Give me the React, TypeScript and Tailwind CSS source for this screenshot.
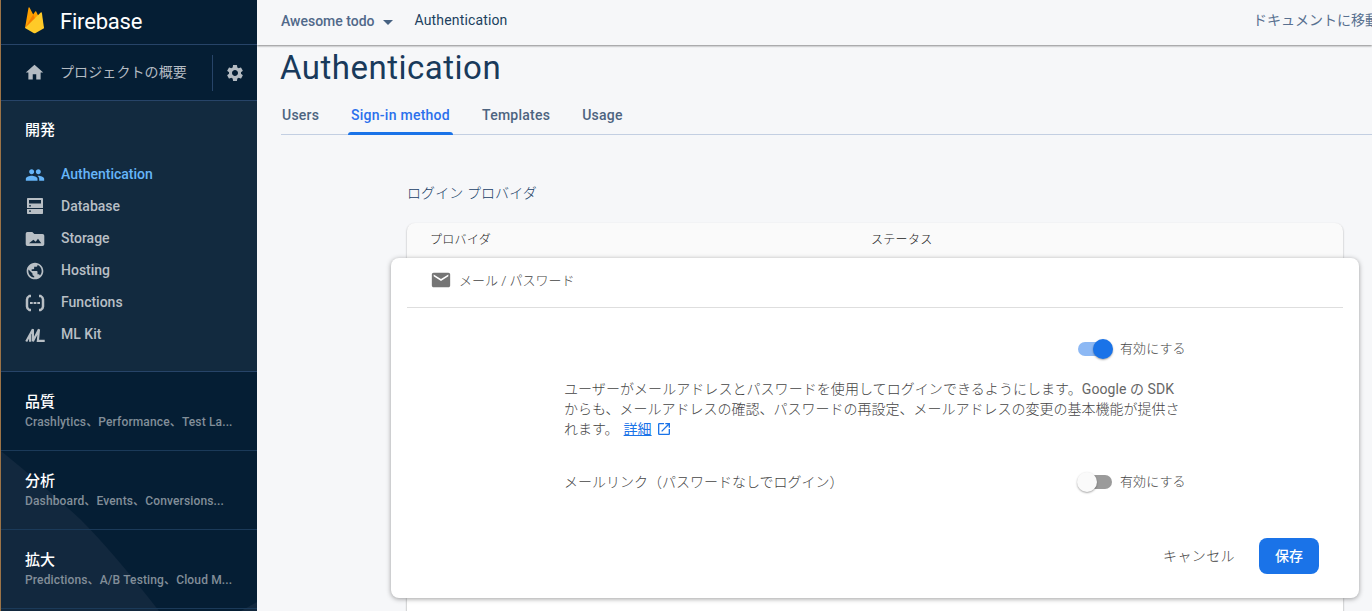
import type { ReactNode } from "react";
import { MdHome, MdSettings, MdPeople, MdPublic, MdEmail, MdOpenInNew } from "react-icons/md";

function FirebaseLogo() {
  return (
    <svg width="19" height="27" viewBox="0 0 19 27" className="shrink-0">
      <path d="M0 21 3.5.7Q3.9-.2 4.5.6L8.2 7.6 10.2 4.6Q10.7 3.8 11.2 4.6L19 21Z" fill="#ffa000" />
      <path d="M11.2 14 8.2 7.5 0 21Z" fill="#f57c00" />
      <path d="M0 21 15.7 5.6Q16.6 4.8 16.9 6L19 21.2 10.7 25.9Q9.6 26.4 8.6 25.9Z" fill="#ffca28" />
    </svg>
  );
}

function DatabaseIcon() {
  return (
    <svg width="18" height="18" viewBox="0 0 18 18" fill="currentColor" fillRule="evenodd" className="-mt-0.5">
      <path d="M1.800 1h14.400q.8 0 .8.800V11H1V1.800Q1 1 1.800 1ZM3 3v3.500h12V3ZM3 8.300v1.200h2V8.300Z" />
      <path d="M1 12h16v4.200q0 .8-.8.800H1.800q-.8 0-.8-.8Zm2 1.500v1.200h2v-1.200Z" />
    </svg>
  );
}

function StorageIcon() {
  return (
    <svg width="20" height="18" viewBox="0 0 20 18" fill="currentColor" fillRule="evenodd">
      <path d="M2.300 2h5l2 2H17.500q1.800 0 1.800 1.800v8.400q0 1.800-1.800 1.800H2.500Q.7 16 .7 14.200V3.800Q.7 2 2.300 2ZM4 13.300h12.300l-3.300-4.500-2.300 3-2.300-2Z" />
    </svg>
  );
}

function FunctionsIcon() {
  return (
    <svg width="20" height="18" viewBox="0 0 20 18" fill="none" stroke="currentColor" strokeWidth="2.500">
      <path d="M6 2H4.300Q2 3.200 2 5.500v7Q2 14.800 4.300 16H6M14 2h1.700Q18 3.200 18 5.500v7Q18 14.800 15.700 16H14" />
      <path d="M5 9h2.700M8.600 9h2.800M12.300 9h2.700" strokeWidth="2" />
    </svg>
  );
}

function MlIcon() {
  return (
    <svg width="21" height="18" viewBox="0 0 21 18" fill="none" stroke="currentColor" strokeWidth="2.300">
      <path d="M1.300 15.800 8.300 3v12.500L14.700 3 13.500 15.200h7.200M5.400 8.500v7.500" />
    </svg>
  );
}

const products: { label: string; icon: ReactNode; active?: boolean }[] = [
  { label: "Authentication", icon: <MdPeople size={20} />, active: true },
  { label: "Database", icon: <DatabaseIcon /> },
  { label: "Storage", icon: <StorageIcon /> },
  { label: "Hosting", icon: <MdPublic size={20} /> },
  { label: "Functions", icon: <FunctionsIcon /> },
  { label: "ML Kit", icon: <MlIcon /> },
];

const groups = [
  { title: "品質", items: "Crashlytics、Performance、Test La..." },
  { title: "分析", items: "Dashboard、Events、Conversions..." },
  { title: "拡大", items: "Predictions、A/B Testing、Cloud M..." },
];

function Sidebar() {
  return (
    <aside className="relative flex h-full w-[257px] shrink-0 flex-col overflow-hidden border-l border-[#9b7347] bg-[#051e34]">
      <svg className="absolute bottom-0 left-0" width="256" height="160" viewBox="0 0 256 160">
        <path d="M0 0Q48 39 80 69Q112 101 158 160H0Z" fill="#12283e" />
        <path d="M240 160 256 151v9Z" fill="#12283e" />
      </svg>
      <div className="relative flex h-[45px] shrink-0 items-center gap-4 border-b border-[#274468] pb-[4px] pl-6">
        <FirebaseLogo />
        <span className="mt-[3px] text-[22px] leading-7 tracking-[-0.2px] text-white">Firebase</span>
      </div>
      <div className="relative flex h-14 shrink-0 items-center border-b border-[#274468] pl-[23px] text-[#b4bbc2]">
        <MdHome size={21} />
        <span className="mt-[-2px] ml-[15px] w-[152px] text-sm leading-5 tracking-[0.1px]">プロジェクトの概要</span>
        <div className="h-9 w-px bg-[#274468]" />
        <MdSettings size={20} className="ml-3" />
      </div>
      <section className="relative h-[271px] shrink-0 border-b border-[#274468] bg-[#122a3f] pt-[19px] pl-6">
        <h2 className="text-[15px] leading-5 font-medium text-white">開発</h2>
        <nav className="mt-[18px]">
          {products.map((p) => (
            <a
              key={p.label}
              className={`flex h-8 items-center gap-4 text-sm font-medium ${p.active ? "text-[#66b5f8]" : "text-[#b8bfc5]"}`}
            >
              <span className="flex w-5 justify-center pt-0.5">{p.icon}</span>
              {p.label}
            </a>
          ))}
        </nav>
      </section>
      {groups.map((g) => (
        <section key={g.title} className="relative h-[79px] shrink-0 border-b border-[#1b3a59] pt-5 pl-6">
          <h2 className="text-[15px] leading-5 font-medium text-white">{g.title}</h2>
          <p className="text-[12px] leading-5 font-medium tracking-[0.14px] whitespace-nowrap text-[#828e99]">{g.items}</p>
        </section>
      ))}
    </aside>
  );
}

function Toggle({ on }: { on?: boolean }) {
  return (
    <div className="flex items-center">
      <div
        className={`flex h-[14px] w-[34px] items-center rounded-full ${on ? "justify-end bg-[#8cb8f4]" : "justify-start bg-[#9b9b9b]"}`}
      >
        <div
          className={`size-5 shrink-0 rounded-full shadow-[0_1px_2px_rgba(0,0,0,0.35)] ${on ? "-mr-px bg-[#1a73e8]" : "-ml-px bg-[#fafafa]"}`}
        />
      </div>
      <span className="ml-2 text-[13px] leading-5 font-light tracking-[0.1px] text-[#444]">有効にする</span>
    </div>
  );
}

const tabs = ["Users", "Sign-in method", "Templates", "Usage"];

export default function App() {
  return (
    <div className="flex h-[611px] w-full overflow-hidden bg-[#f6f7f9] font-['Roboto','Noto_Sans_CJK_JP',sans-serif]">
      <Sidebar />
      <main className="flex min-w-0 flex-1 flex-col overflow-hidden">
        <header className="flex h-[45px] shrink-0 justify-between pl-6 shadow-[0_1px_2px_rgba(0,0,0,0.45)]">
          <div className="flex text-sm leading-5 font-medium text-[#51698a]">
            <span className="pt-[11px]">Awesome todo</span>
            <svg width="10" height="5" viewBox="0 0 10 5" className="mt-5 ml-2" fill="#476282">
              <path d="M0 0h10L5 5Z" />
            </svg>
            <span className="ml-[22px] pt-[10px] font-normal tracking-[0.15px] text-[#203f5e]">Authentication</span>
          </div>
          <div className="w-[119px] shrink-0 overflow-hidden pt-[10px] text-sm leading-5 whitespace-nowrap text-[#587090]">
            ドキュメントに移動
          </div>
        </header>
        <h1 className="mt-[3px] ml-[23px] text-[33px] leading-10 tracking-[0.5px] text-[#193a5b]">
          Authentication
        </h1>
        <nav className="mt-[7px] ml-6 flex h-10 shrink-0 border-b border-[#c3cfe2] text-sm font-medium tracking-[0.25px] text-[#4d6480]">
          {tabs.map((t, i) =>
            i === 1 ? (
              <div key={t} className="mr-[29px] ml-[29px] flex h-10 w-[105px] flex-col justify-between pt-[10px] text-center text-[#2b70ec]">
                <span className="leading-5 whitespace-nowrap">{t}</span>
                <span className="h-[3px] rounded-t-[3px] bg-[#1a73e8]" />
              </div>
            ) : (
              <span key={t} className={`pt-[10px] leading-5 ${i === 0 ? "w-[38px] pl-px" : "mr-8"}`}>
                {t}
              </span>
            ),
          )}
        </nav>
        <div className="mt-12 ml-[150px] text-sm leading-[21px] font-light tracking-[0.1px] text-[#203f68]">ログイン プロバイダ</div>
        <div className="mt-[19px] ml-[134px] w-[968px]">
          <div className="mx-4 flex h-[35px] items-center rounded-t-lg bg-[#fafafa] pb-px pl-[23px] text-xs font-light text-[#222] shadow-[0_1px_2px_rgba(0,0,0,0.35)]">
            <span className="w-[441px] tracking-[0.3px]">プロバイダ</span>
            <span className="tracking-[0.3px]">ステータス</span>
          </div>
          <section className="relative h-[340px] rounded-lg bg-white px-4 text-[#444] shadow-[0_1px_5px_rgba(0,0,0,0.38)]">
            <div className="flex h-[50px] items-center border-b border-[#dedede] pb-[5px] pl-6 font-light">
              <MdEmail size={22} className="-ml-px text-[#757575]" />
              <span className="mt-[2px] ml-[7px] text-[13px] leading-5">メール / パスワード</span>
            </div>
            <div className="flex pt-[31px] pl-[671px]">
              <Toggle on />
            </div>
            <div className="mt-5 ml-[157px] w-[622px] text-sm leading-5 font-light">
              <p className="tracking-[0.06px]">
                ユーザーがメールアドレスとパスワードを使用してログインできるようにします。
                <span className="font-normal text-[#666]">Google の SDK</span>
              </p>
              <p>からも、メールアドレスの確認、パスワードの再設定、メールアドレスの変更の基本機能が提供さ</p>
              <p className="flex items-center">
                れます。
                <a className="ml-[5px] font-normal text-[#1a73e8] underline">詳細</a>
                <MdOpenInNew size={16} className="ml-1 text-[#1a73e8]" />
              </p>
            </div>
            <div className="mt-[33px] ml-[157px] flex text-sm leading-5 font-light">
              <span className="w-[514px]">メールリンク（パスワードなしでログイン）</span>
              <Toggle />
            </div>
            <div className="mt-[46px] mr-6 flex items-center justify-end gap-6 text-sm">
              <span className="font-light tracking-[0.4px]">キャンセル</span>
              <button className="h-9 w-[60px] rounded-lg bg-[#1a73e8] font-medium text-white">保存</button>
            </div>
          </section>
          <div className="mx-4 h-8 bg-white shadow-[0_0_2px_rgba(0,0,0,0.4)]" />
        </div>
      </main>
    </div>
  );
}
